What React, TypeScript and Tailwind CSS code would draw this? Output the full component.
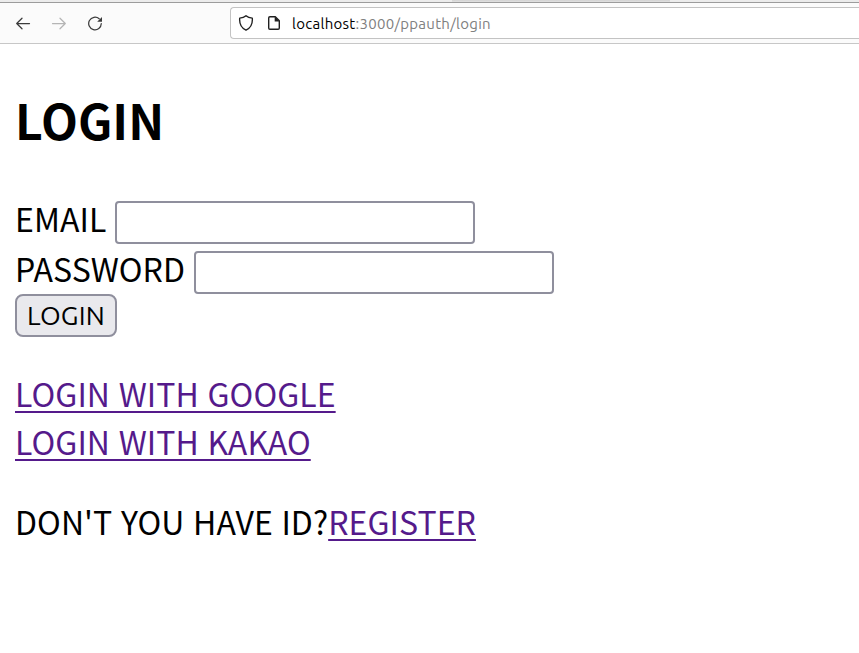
import React from "react";

const pageFont = "font-['Noto_Sans_CJK_KR','Noto_Sans',sans-serif]";
const uiFont = "font-['Ubuntu','Noto_Sans',sans-serif]";

function Toolbar() {
  return (
    <header className={`${uiFont} h-[44px] bg-[#fbfbfb] border-b border-[#c7c7c7] flex flex-col`}>
      <div className="h-[3px] bg-[#ececec] border-b border-[#9c9c9c] pl-[452px]">
        <div className="h-[2px] w-[218px] bg-linear-to-b from-[#d2d2d2] to-[#e2e2e2]" />
      </div>
      <div className="flex h-10 items-center">
        <nav className="flex w-[230px] gap-5 pl-[15px]">
          <svg width="16" height="16" viewBox="0 0 16 16" fill="none" stroke="#3b3b3b" strokeWidth="1.25" strokeLinecap="round" strokeLinejoin="round"><path d="M14.5 8.5H1.7M7 3.2L1.7 8.5L7 13.8" /></svg>
          <svg width="16" height="16" viewBox="0 0 16 16" fill="none" stroke="#b5b5b5" strokeWidth="1.25" strokeLinecap="round" strokeLinejoin="round"><path d="M1.5 8.5H14.3M9 3.2L14.3 8.5L9 13.8" /></svg>
          <svg width="16" height="16" viewBox="0 0 16 16" fill="none" stroke="#3b3b3b" strokeWidth="1.25" strokeLinecap="round"><path d="M14.3 8.6A6.3 6.3 0 1 1 12.2 3.8" /><path d="M15 2V6.8H10.2Z" fill="#3b3b3b" stroke="none" /></svg>
        </nav>
        <div className="flex h-8 flex-1 items-center rounded-l-[4px] border border-r-0 border-[#c3c3c3] bg-white pl-[7px]">
          <svg width="16" height="16" viewBox="0 0 16 16" fill="none" stroke="#202020" strokeWidth="1.35" strokeLinejoin="round"><path d="M8 .8C9.5 2.2 11.8 3 14.3 3.1C14.8 8.8 12.8 13 8 15.2C3.2 13 1.2 8.8 1.7 3.1C4.2 3 6.5 2.2 8 .8Z" /></svg>
          <svg className="ml-3" width="16" height="16" viewBox="0 0 16 16" fill="none" stroke="#202020" strokeWidth="1.4" strokeLinejoin="round"><path d="M9.3 1.7H3.9Q2.7 1.7 2.7 2.9V13.1Q2.7 14.3 3.9 14.3H12.1Q13.3 14.3 13.3 13.1V5.7Z" /><path d="M8.7 1.5V6.4H13.6Z" fill="#202020" stroke="none" /></svg>
          <span className="ml-[10px] pt-[2px] text-[15px] leading-5 tracking-[0.28px] text-[#808080]"><span className="text-black">localhost</span>:3000/ppauth/login</span>
        </div>
      </div>
    </header>
  );
}

export default function App() {
  return (
    <div className="h-[653px] overflow-hidden bg-white text-black">
      <Toolbar />
      <main className={`${pageFont} pl-[15px] pt-10 text-[32px] leading-[48px] font-normal tracking-[0.06px] [word-spacing:1.4px]`}>
        <h2 className="h-[110px] text-[48px] leading-[70px] font-bold tracking-normal">LOGIN</h2>
        <form>
          <label className="flex h-[50px] items-start pt-[7px]">
            <span className="-mt-[7px] w-[100px] whitespace-nowrap">EMAIL</span>
            <input className="h-[43px] w-[360px] rounded-[4px] border-2 border-[#8f8f9d] bg-white" />
          </label>
          <label className="flex h-[50px] items-start pt-[7px]">
            <span className="-mt-[7px] w-[179px] whitespace-nowrap">PASSWORD</span>
            <input type="password" className="h-[43px] w-[360px] rounded-[4px] border-2 border-[#8f8f9d] bg-white" />
          </label>
          <button type="button" className={`${uiFont} flex h-[43px] w-[102px] items-center justify-center rounded-[8px] border-2 border-[#8f8f9d] bg-[#e9e9ed] text-[26.67px] font-normal leading-none tracking-[0.2px]`}>LOGIN</button>
        </form>
        <div className="mt-8 flex flex-col items-start text-[#551a8b]">
          <a href="#" className="underline decoration-2 underline-offset-[4px]">LOGIN WITH GOOGLE</a>
          <a href="#" className="underline decoration-2 underline-offset-[4px]">LOGIN WITH KAKAO</a>
        </div>
        <p className="mt-8 flex"><span>DON'T YOU HAVE ID?</span><a href="#" className="text-[#551a8b] underline decoration-2 underline-offset-[4px]">REGISTER</a></p>
      </main>
    </div>
  );
}
